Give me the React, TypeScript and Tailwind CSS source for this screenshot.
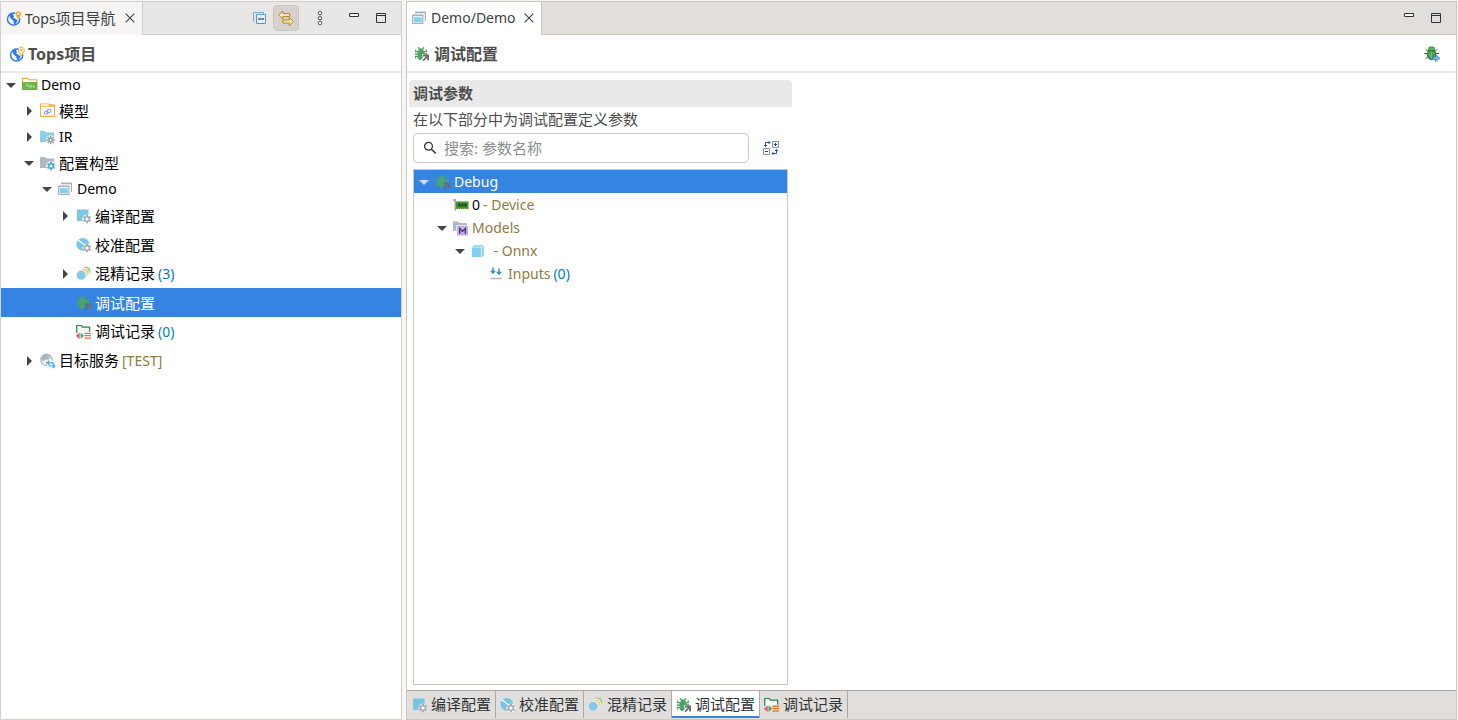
import React, { useState } from 'react';
import { clsx } from 'clsx';

const iconClass = 'w-4 h-4 shrink-0';

function GlobePin({ outlined }: { outlined?: boolean }) {
  return (
    <svg viewBox="0 0 16 16" className={iconClass} aria-hidden="true">
      <circle cx="7.6" cy="9" r="6.1" fill="#fff" stroke="#2b78f0" strokeWidth="1.5" />
      <path d="M3.2 5.2 6.8 3.6 8 6.5l-1 1 2.5 1.2 2.2 1.8-2.4 4-1.6-1.3-.3-2.4L4.6 8.6z" fill="#2b78f0" />
      <path
        d="M12.3 10 9.7 5.6a3 3 0 1 1 5.2 0z"
        fill={outlined ? '#fff3dc' : '#f5a62c'}
        stroke={outlined ? '#f5a62c' : '#fff'}
        strokeWidth={outlined ? 1 : 0.5}
      />
      <circle cx="12.3" cy="4.1" r="1.1" fill={outlined ? '#f5a62c' : '#fff'} />
    </svg>
  );
}

function ProjectFolder() {
  return (
    <svg viewBox="0 0 16 16" className={iconClass} aria-hidden="true">
      <path d="M.6 5V1.4h5L7 2.8h7.7V5" fill="none" stroke="#f0a93a" strokeWidth="1.1" />
      <path d="M0 5h15.5v8H0z" fill="#6fb544" />
      <path d="M4 7.5h2M5 7.5V10M7 8.5h1V10H7zM9 8.5h1v1H9V11M12.3 8.5h-1v1h1v1h-1" fill="none" stroke="#d4edc4" strokeWidth=".6" />
    </svg>
  );
}

function ModelFolder() {
  return (
    <svg viewBox="0 0 16 16" className={iconClass} aria-hidden="true">
      <path d="M.6 1h8.6l1.2 1.8h4.2v10.6H.6z" fill="#fff" stroke="#f0b04a" strokeWidth="1.1" />
      <path d="M9 1.2h5.6v2.6H.6V2.6H9z" fill="#f0b04a" />
      <path d="M1.2 1.7h7v1h-7z" fill="#fff" />
      <ellipse cx="6.4" cy="9.6" rx="2.2" ry="1.4" fill="none" stroke="#5b90e2" strokeWidth=".9" transform="rotate(-20 6.4 9.6)" />
      <ellipse cx="9" cy="8" rx="2.2" ry="1.7" fill="none" stroke="#5b90e2" strokeWidth=".9" transform="rotate(-20 9 8)" />
    </svg>
  );
}

// small cog used in the lower right corner of several icons
function Cog({ fill, hole = '#fff' }: { fill: string; hole?: string }) {
  return (
    <g>
      <path d="M11 6.8v8.4M7.4 8.9l7.2 4.2M7.4 13.1l7.2-4.2" stroke={fill} strokeWidth="2" />
      <circle cx="11" cy="11" r="3" fill={fill} />
      <circle cx="11" cy="11" r="1.6" fill={hole} />
    </g>
  );
}

function IrFolder() {
  return (
    <svg viewBox="0 0 16 16" className={iconClass} aria-hidden="true">
      <path d="M0 2h5l1.5 1.5H14V13H0z" fill="#8bd0ea" />
      <circle cx="10.7" cy="11" r="4.8" fill="#fff" fillOpacity=".8" />
      <path d="M10.7 6.8v8.4M6.5 11h8.4M7.7 8l6 6M13.7 8l-6 6" stroke="#8f9ba6" strokeWidth="1.3" />
      <circle cx="10.7" cy="11" r="1" fill="#fff" />
    </svg>
  );
}

function ConfigFolder() {
  return (
    <svg viewBox="0 0 16 16" className={iconClass} aria-hidden="true">
      <path d="M0 2h5l1.5 1.5H14V13H0z" fill="#adb8c0" />
      <circle cx="11" cy="11" r="4.8" fill="#fff" />
      <Cog fill="#3db0de" />
    </svg>
  );
}

function Windows() {
  return (
    <svg viewBox="0 0 16 16" className={iconClass} aria-hidden="true">
      <path d="M3 2.3h10.4V11" fill="none" stroke="#a7b3ba" strokeWidth="1.2" />
      <path d="M3 2.5h10.4" stroke="#a7b3ba" strokeWidth="1.6" />
      <path d="M.6 5.3h10.3v8.1H.6z" fill="#fff" stroke="#a7b3ba" strokeWidth="1.2" />
      <path d="M.6 5.4h10.3" stroke="#a7b3ba" strokeWidth="1.6" />
      <path d="M1.8 7.2h8v5h-8z" fill="#82cfee" />
    </svg>
  );
}

function CompileIcon() {
  return (
    <svg viewBox="0 0 16 16" className={iconClass} aria-hidden="true">
      <path d="M1 1.5h11.5v5.3A4.7 4.7 0 0 0 6.5 13H1z" fill="#76c6e6" />
      <Cog fill="#a3adb8" />
    </svg>
  );
}

function CalibrateIcon() {
  return (
    <svg viewBox="0 0 16 16" className={iconClass} aria-hidden="true">
      <circle cx="6.8" cy="7.3" r="6.4" fill="#76c6e6" />
      <path d="m1.5 2.5 11 8.5" stroke="#fff" strokeWidth="1.2" />
      <circle cx="11" cy="11" r="4.6" fill="#fff" fillOpacity=".8" />
      <Cog fill="#a3adb8" />
    </svg>
  );
}

function MixIcon() {
  return (
    <svg viewBox="0 0 16 16" className={iconClass} aria-hidden="true">
      <circle cx="10.3" cy="4.8" r="4.2" fill="#a3d29c" />
      <circle cx="8.4" cy="6.6" r="4.5" fill="#fff" />
      <circle cx="8.2" cy="6.8" r="4.1" fill="#f8cd92" />
      <circle cx="5.6" cy="9" r="5" fill="#fff" />
      <circle cx="5.2" cy="9.2" r="4.6" fill="#82cbe9" />
    </svg>
  );
}

function DebugIcon() {
  return (
    <svg viewBox="0 0 16 16" className={iconClass} aria-hidden="true">
      <path d="M4 1.2 5.3 3M10 1.2 8.7 3M1.7 3.5v2.2h2.5M12.3 3.5v2.2H9.8M.8 8h3M10 8h3.2M1.7 12.5v-2.2h2.5" fill="none" stroke="#4da467" strokeWidth="1.3" />
      <path d="M4.3 5.2C4.3 3.4 5.5 2.3 7 2.3s2.7 1.1 2.7 2.9h1V8H8v2.2l1 .8-2.5 3.2c-2-.3-3-1.6-3-3.7V5.2z" fill="#4da467" />
      <path d="M6.5 8.2h1.2v4.5" fill="none" stroke="#4da467" strokeWidth="1.2" />
      <path d="M9 8.6h6v6h-1.8V11.7l-3.6 3.6-1.3-1.3 3.6-3.6H9z" fill="#6d6d6d" />
    </svg>
  );
}

function RecordIcon() {
  return (
    <svg viewBox="0 0 16 16" className={iconClass} aria-hidden="true">
      <path d="M.7 9V1.5h4.6l1.4 1.6h6.9v4.6" fill="#f3faf5" stroke="#24854a" strokeWidth="1.2" />
      <path d="M3.6 8.4V15L0 11.7z" fill="#e0525e" />
      <path d="M4.6 8.4V15L8 11.7z" fill="#43a566" />
      <path d="M8.5 9.3H15M8.5 11.7H15M8.5 14.1H15" stroke="#ea7323" strokeWidth="1.3" />
    </svg>
  );
}

function TargetIcon() {
  return (
    <svg viewBox="0 0 16 16" className={iconClass} aria-hidden="true">
      <circle cx="6.5" cy="6.8" r="5.7" fill="#eef2f4" stroke="#a2aeb5" strokeWidth="1.1" />
      <path d="M1.8 4.3 5 1.8l3.5.5L10.2 5 8 6.8 5.5 6.2 4 8.2 2 7zM5.8 9.2l3-.8 1 2-3.2 2z" fill="#a9b5bc" />
      <path d="M7 7.5h9V16H7z" fill="#fff" />
      <path d="M7.2 9.8h6.6M9.4 7.6 7.2 9.8l2.2 2M14.8 13H8.5M12.5 10.8l2.3 2.2-2.3 2.2" fill="none" stroke="#3daedc" strokeWidth="1.2" />
    </svg>
  );
}

function DeviceIcon() {
  return (
    <svg viewBox="0 0 16 16" className={iconClass} aria-hidden="true">
      <path d="M0 3h2.2v10.5" fill="none" stroke="#9a9c98" strokeWidth="1.4" />
      <path d="M3 4h12.5v8H3z" fill="#3b9636" />
      <path d="M3 4.6h12.5" stroke="#8fd07a" />
      <path d="M5.5 6.5h2v3h-2zM8.5 6.5h2v3h-2zM11.5 6.5h2v3h-2z" fill="#1d3b1c" />
      <path d="M5 11.5h9" stroke="#b5a957" strokeDasharray="1 1" />
    </svg>
  );
}

function ModelsIcon() {
  return (
    <svg viewBox="0 0 16 16" className={iconClass} aria-hidden="true">
      <path d="M0 1.5h5L6.5 3H14v8H0z" fill="#adb8c0" />
      <path d="M3.3 5.4H16V16H3.3z" fill="#fff" />
      <path d="M4 6h11v9.5H4z" fill="#c3a9f2" />
      <path d="M6.7 13.7V8.4l2.8 3 2.8-3v5.3" fill="none" stroke="#3c2c55" strokeWidth="1.2" />
    </svg>
  );
}

function CubeIcon() {
  return (
    <svg viewBox="0 0 16 16" className={iconClass} aria-hidden="true">
      <path d="M1 4.4h9.2V14H1z" fill="#82cfee" />
      <path d="M1.2 3.7 3 2.2h9.6l-1.8 1.5z" fill="#82cfee" />
      <path d="M11 4.2 12.8 2.6v9.8L11 14z" fill="#82cfee" />
    </svg>
  );
}

function InputsIcon() {
  return (
    <svg viewBox="0 0 16 16" className={iconClass} aria-hidden="true">
      <path d="M4 1.5V7M10 2.5V8" stroke="#338fc4" strokeWidth="1.5" />
      <path d="M1 4.8h6L4 8.3zM7 5.8h6l-3 3.5z" fill="#338fc4" />
      <path d="M1.5 12.5h11.5" stroke="#aeb8bd" strokeWidth="1.5" />
    </svg>
  );
}

function CollapseAll() {
  return (
    <svg viewBox="0 0 16 16" className={iconClass} aria-hidden="true">
      <path d="M1.5 11.5v-9h10v2" fill="#d9e8f7" stroke="#7fa6cf" />
      <path d="M4.5 4.5h9v9h-9z" fill="#e5f1fb" stroke="#6493c2" />
      <path d="M6 9h6" stroke="#174a86" strokeWidth="1.2" />
    </svg>
  );
}

function LinkEditor() {
  return (
    <svg viewBox="0 0 16 16" className={iconClass} aria-hidden="true">
      <path d="M.7 5 4.8 1v2.6h7v2.8h-7V9z" fill="#fdf0c4" stroke="#b9801c" />
      <path d="M15.3 11.5 11.2 7.4V10H5v3h6.2v2.6z" fill="#fdf0c4" stroke="#b9801c" />
    </svg>
  );
}

function ViewMenu() {
  return (
    <svg viewBox="0 0 16 16" className={iconClass} fill="#fff" stroke="#5c5c5c" aria-hidden="true">
      <circle cx="8" cy="3" r="1.8" />
      <circle cx="8" cy="8" r="1.8" />
      <circle cx="8" cy="13" r="1.8" />
    </svg>
  );
}

function Minimize() {
  return (
    <svg viewBox="0 0 16 16" className={iconClass} aria-hidden="true">
      <path d="M3.5 3.5h9v3h-9z" fill="#fff" stroke="#2e3436" />
    </svg>
  );
}

function Maximize() {
  return (
    <svg viewBox="0 0 16 16" className={iconClass} fill="none" stroke="#2e3436" aria-hidden="true">
      <path d="M3.5 3.5h9v9h-9zM3 5.5h10" />
    </svg>
  );
}

function CloseIcon() {
  return (
    <svg viewBox="0 0 10 10" className="w-[10px] h-[10px]" aria-hidden="true">
      <path d="m.7.7 8.6 8.6M9.3.7.7 9.3" stroke="#3c4043" strokeWidth="1.1" />
    </svg>
  );
}

function SearchIcon() {
  return (
    <svg viewBox="0 0 16 16" className={iconClass} fill="none" stroke="#2e3436" aria-hidden="true">
      <circle cx="6.5" cy="6.2" r="3.9" strokeWidth="1.3" />
      <path d="m9.4 9.2 4.4 4.3" strokeWidth="1.5" />
    </svg>
  );
}

function ExpandToggle() {
  return (
    <svg viewBox="0 0 16 16" className={iconClass} fill="none" aria-hidden="true">
      <path d="M9.5 1.5h6v6h-6zM.5 8.5h6v6h-6z" fill="#fff" stroke="#7d92ac" />
      <path d="M11 4.5h3M12.5 3v3M2 11.5h3" stroke="#10457c" />
      <path d="M2.5 6.5v-4H7M5.5 1 7 2.5 5.5 4M1 5l1.5 1.5L4 5M13.5 9.5v4H9M10.5 12 9 13.5l1.5 1.5M12 11l1.5-1.5L15 11" stroke="#2653b5" />
    </svg>
  );
}

function LaunchDebug() {
  return (
    <svg viewBox="0 0 16 16" className={iconClass} aria-hidden="true">
      <path d="M5 .8 6 2.5M10 .8 9 2.5M1.5 3 4.2 5.5M13.5 3 10.8 5.5M0 7.5h15M1.5 13l3-3M13.5 13l-3-3" stroke="#3d6f42" />
      <ellipse cx="7.5" cy="8.4" rx="4.3" ry="5.3" fill="#3f9546" stroke="#2a6b35" strokeWidth=".8" />
      <path d="M4.5 3.2a3 2.4 0 0 1 6 0v1.3h-6z" fill="#5cb55e" stroke="#2a6b35" strokeWidth=".7" />
      <path d="M5.7 6.7v4M7.5 5.7v6.5M9.3 6.7v2" stroke="#8fca89" strokeWidth=".8" />
      <path d="M8.5 11h3V8.8l4.3 3.4-4.3 3.4v-2.2h-3z" fill="#6db5f5" stroke="#2a77cc" strokeWidth=".7" />
    </svg>
  );
}

function Arrow({ open, selected }: { open?: boolean; selected?: boolean }) {
  return (
    <svg viewBox="0 0 10 10" className="w-[10px] h-[10px]" fill={selected ? '#c8dcf5' : '#464646'} aria-hidden="true">
      <path d={open ? 'M0 3h10L5 8z' : 'M3 0v10l5-5z'} />
    </svg>
  );
}

interface TreeNode {
  id: string;
  depth: number;
  icon: React.ReactNode;
  label?: string;
  note?: string;
  count?: string;
  open?: boolean;
  height: string;
}

const indentClass = ['pl-[5px]', 'pl-[23px]', 'pl-[41px]', 'pl-[59px]', 'pl-[77px]'];

const projectNodes: TreeNode[] = [
  { id: 'demo', depth: 0, icon: <ProjectFolder />, label: 'Demo', open: true, height: 'h-6' },
  { id: 'model', depth: 1, icon: <ModelFolder />, label: '模型', open: false, height: 'h-7' },
  { id: 'ir', depth: 1, icon: <IrFolder />, label: 'IR', open: false, height: 'h-6' },
  { id: 'config', depth: 1, icon: <ConfigFolder />, label: '配置构型', open: true, height: 'h-7' },
  { id: 'config-demo', depth: 2, icon: <Windows />, label: 'Demo', open: true, height: 'h-6' },
  { id: 'compile', depth: 3, icon: <CompileIcon />, label: '编译配置', open: false, height: 'h-[29px]' },
  { id: 'calibrate', depth: 3, icon: <CalibrateIcon />, label: '校准配置', height: 'h-[29px]' },
  { id: 'mix', depth: 3, icon: <MixIcon />, label: '混精记录', count: '(3)', open: false, height: 'h-[29px]' },
  { id: 'debug', depth: 3, icon: <DebugIcon />, label: '调试配置', height: 'h-[29px]' },
  { id: 'record', depth: 3, icon: <RecordIcon />, label: '调试记录', count: '(0)', height: 'h-[29px]' },
  { id: 'target', depth: 1, icon: <TargetIcon />, label: '目标服务', note: '[TEST]', open: false, height: 'h-[29px]' },
];

const paramNodes: TreeNode[] = [
  { id: 'debug', depth: 0, icon: <DebugIcon />, label: 'Debug', open: true, height: 'h-[23px]' },
  { id: 'device', depth: 1, icon: <DeviceIcon />, label: '0', note: '- Device', height: 'h-[23px]' },
  { id: 'models', depth: 1, icon: <ModelsIcon />, note: 'Models', open: true, height: 'h-[23px]' },
  { id: 'onnx', depth: 2, icon: <CubeIcon />, note: '\u00a0- Onnx', open: true, height: 'h-[23px]' },
  { id: 'inputs', depth: 3, icon: <InputsIcon />, note: 'Inputs', count: '(0)', height: 'h-[23px]' },
];

const editorTabs = [
  { id: 'compile', label: '编译配置', icon: <CompileIcon /> },
  { id: 'calibrate', label: '校准配置', icon: <CalibrateIcon /> },
  { id: 'mix', label: '混精记录', icon: <MixIcon /> },
  { id: 'debug', label: '调试配置', icon: <DebugIcon /> },
  { id: 'record', label: '调试记录', icon: <RecordIcon /> },
];

// Latin labels are set one step smaller than Chinese ones
const isLatin = (s: string) => /^[\x00-\xff]*$/.test(s);

function Tree({ nodes, initial, label }: { nodes: TreeNode[]; initial: string; label: string }) {
  const [selected, setSelected] = useState(initial);

  return (
    <ul role="tree" aria-label={label}>
      {nodes.map((node) => {
        const active = node.id === selected;
        return (
          <li key={node.id} role="treeitem" aria-selected={active} aria-expanded={node.open}>
            <button
              onClick={() => setSelected(node.id)}
              className={clsx(
                'w-full flex items-center text-left whitespace-nowrap',
                node.height,
                indentClass[node.depth],
                active ? 'bg-[#3584e4] text-white' : 'text-black',
              )}
            >
              <span className="w-4 shrink-0">
                {node.open !== undefined && <Arrow open={node.open} selected={active} />}
              </span>
              {node.icon}
              <span className="flex items-baseline gap-[3px] pl-[3px]">
                {node.label && (
                  <span className={isLatin(node.label) ? 'text-sm' : 'text-[15px] leading-5'}>{node.label}</span>
                )}
                {node.note && <span className="text-sm text-[#8f7a42]">{node.note}</span>}
                {node.count && <span className="text-sm text-[#0080b0]">{node.count}</span>}
              </span>
            </button>
          </li>
        );
      })}
    </ul>
  );
}

function ToolButton({ label, children, pressed }: { label: string; children: React.ReactNode; pressed?: boolean }) {
  return (
    <button
      aria-label={label}
      aria-pressed={pressed}
      className={clsx(
        'w-[26px] h-[26px] flex items-center justify-center rounded',
        pressed && 'bg-[#d6d1cd] border border-[#cbc5c0]',
      )}
    >
      {children}
    </button>
  );
}

function Navigator() {
  return (
    <aside className="w-[402px] shrink-0 flex flex-col bg-white border border-[#d5d0cc]">
      <div className="h-[33px] shrink-0 flex items-center bg-[#e8e7e6] border-b border-[#d5d0cc]">
        <div className="h-[33px] flex items-center pl-[5px] pr-[7px] bg-[#f6f5f4] border-r border-[#d5d0cc]">
          <GlobePin />
          <span className="pl-[3px] text-[15px] text-[#3c4043] whitespace-nowrap">
            <span className="text-sm">Tops</span>项目导航
          </span>
          <button aria-label="关闭 Tops项目导航" className="ml-[9px]">
            <CloseIcon />
          </button>
        </div>
        <div className="ml-auto flex items-center pr-[7px]">
          <ToolButton label="全部折叠"><CollapseAll /></ToolButton>
          <ToolButton label="链接编辑器" pressed><LinkEditor /></ToolButton>
          <div className="w-2" />
          <ToolButton label="视图菜单"><ViewMenu /></ToolButton>
          <div className="w-2" />
          <ToolButton label="最小化"><Minimize /></ToolButton>
          <div className="w-px" />
          <ToolButton label="最大化"><Maximize /></ToolButton>
        </div>
      </div>
      <header className="h-[38px] shrink-0 flex items-center gap-[3px] pt-0.5 pl-2 border-b-2 border-[#e9e9e9]">
        <GlobePin outlined />
        <h1 className="text-base font-bold text-[#4d4d4d]">Tops项目</h1>
      </header>
      <Tree nodes={projectNodes} initial="debug" label="Tops项目" />
    </aside>
  );
}

function ParameterSection() {
  const [query, setQuery] = useState('');

  return (
    <section className="w-[383px] ml-[2px] mt-[7px] mb-[5px] flex-1 min-h-0 flex flex-col">
      <h2 className="h-[27px] shrink-0 flex items-center pl-1 rounded-t bg-[#e9e9e9] text-[15px] font-bold text-[#4d4d4d]">
        调试参数
      </h2>
      <p className="h-[26px] shrink-0 pl-1 text-[15px] leading-6 text-[#4d4d4d]">在以下部分中为调试配置定义参数</p>
      <div className="pl-1 pr-[13px] flex items-center justify-between">
        <label className="w-[336px] h-[30px] flex items-center gap-1.5 px-2 bg-white border border-[#cdc7c2] rounded-[5px]">
          <SearchIcon />
          <input
            value={query}
            onChange={(e) => setQuery(e.target.value)}
            placeholder="搜索: 参数名称"
            aria-label="搜索参数名称"
            className="flex-1 min-w-0 text-[15px] text-[#2e3436] placeholder:text-[#8b8e8f] outline-none"
          />
        </label>
        <button aria-label="展开或折叠">
          <ExpandToggle />
        </button>
      </div>
      <div className="mx-1 mt-1.5 flex-1 min-h-0 bg-white border border-[#cdc7c2] overflow-auto">
        <Tree nodes={paramNodes} initial="debug" label="调试参数" />
      </div>
    </section>
  );
}

function Editor() {
  const [tab, setTab] = useState('debug');

  return (
    <main className="flex-1 min-w-0 flex flex-col bg-white border border-[#cdc7c2]">
      <div className="h-[33px] shrink-0 flex items-center bg-[#e1dedb] border-b border-[#cdc7c2]">
        <div className="h-[33px] flex items-center pl-[5px] pr-[7px] bg-white border-r border-[#cdc7c2]">
          <Windows />
          <span className="pl-[3px] text-sm text-[#3c4043]">Demo/Demo</span>
          <button aria-label="关闭 Demo/Demo" className="ml-2">
            <CloseIcon />
          </button>
        </div>
        <div className="ml-auto flex items-center pr-[7px]">
          <ToolButton label="最小化"><Minimize /></ToolButton>
          <div className="w-px" />
          <ToolButton label="最大化"><Maximize /></ToolButton>
        </div>
      </div>
      <header className="h-[38px] shrink-0 flex items-center gap-1 pt-0.5 pl-[7px] pr-4 border-b-2 border-[#e9e9e9]">
        <DebugIcon />
        <h1 className="text-base font-bold text-[#4d4d4d]">调试配置</h1>
        <button aria-label="调试" className="ml-auto">
          <LaunchDebug />
        </button>
      </header>
      <ParameterSection />
      <div role="tablist" className="h-[29px] shrink-0 flex pl-px bg-[#e1dedb] border-t border-[#a9a9a9]">
        {editorTabs.map((t) => {
          const active = t.id === tab;
          return (
            <button
              key={t.id}
              role="tab"
              aria-selected={active}
              onClick={() => setTab(t.id)}
              className={clsx(
                'h-[27px] flex items-center gap-[3px] pl-1 pr-1 border-r border-[#a9a9a9] text-[15px] text-[#2e3436] whitespace-nowrap',
                active && 'bg-white shadow-[inset_0_-2px_0_#3584e4]',
              )}
            >
              {t.icon}
              {t.label}
            </button>
          );
        })}
      </div>
    </main>
  );
}

export default function App() {
  return (
    <div className="h-screen flex gap-1 pt-px pr-px bg-[#f6f5f4] font-['Noto_Sans','Noto_Sans_CJK_SC',sans-serif]">
      <Navigator />
      <Editor />
    </div>
  );
}
